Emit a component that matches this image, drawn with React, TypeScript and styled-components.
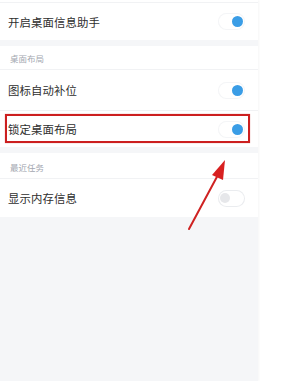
import styled, { createGlobalStyle } from "styled-components"

const GlobalStyle = createGlobalStyle`
  html, body {
    margin: 0;
    padding: 0;
    background: #ffffff;
  }
  body {
    font-family: "Noto Sans CJK SC", "Noto Sans", sans-serif;
  }
`

const Page = styled.div`
  position: relative;
  width: 282px;
  height: 381px;
  display: flex;
  flex-direction: row;
  overflow: hidden;
  background: #ffffff;
`

const Screen = styled.div`
  width: 258px;
  height: 381px;
  display: flex;
  flex-direction: column;
  background: #f5f6f8;
  box-shadow: 1px 0 2px rgba(0, 0, 0, 0.04);
  padding-top: 2px;
  box-sizing: border-box;
  background-image: linear-gradient(#ffffff, #ffffff);
  background-size: 100% 2px;
  background-repeat: no-repeat;
`

const Row = styled.div<{ $height: number; $highlighted?: boolean }>`
  position: relative;
  height: ${({ $height }) => $height}px;
  display: flex;
  flex-direction: row;
  align-items: center;
  justify-content: space-between;
  padding: 0 14px 0 8px;
  background: #ffffff;
  border-top: 1px solid #f1f2f4;
  box-sizing: border-box;

  ${({ $highlighted }) => $highlighted && `
    &::after {
      content: "";
      position: absolute;
      left: 5px;
      right: 8px;
      top: 3px;
      bottom: 4px;
      border: 2px solid #cc1f1f;
      box-shadow: 0 0 1px rgba(200, 30, 30, 0.5);
      pointer-events: none;
    }
  `}
`

const Label = styled.span`
  font-size: 11.4px;
  color: #2e2e2e;
  letter-spacing: 0.1px;
`

const Gap = styled.div<{ $height: number }>`
  height: ${({ $height }) => $height}px;
  background: #f5f6f8;
`

const SectionHeader = styled.div<{ $height: number }>`
  height: ${({ $height }) => $height}px;
  display: flex;
  align-items: flex-end;
  padding: 0 0 5px 10px;
  box-sizing: border-box;
  background: #ffffff;
  font-size: 8.5px;
  color: #a3a7b0;
`

const Track = styled.div<{ $on: boolean }>`
  width: 25px;
  height: 15px;
  border-radius: 8px;
  background: #ffffff;
  box-shadow: ${({ $on }) =>
    $on
      ? "0 0 0 1px #f4f5f7, 0 0 2px rgba(0, 0, 0, 0.07)"
      : "0 0 0 1px #eaecef, 0 0 2px rgba(0, 0, 0, 0.06)"};
  display: flex;
  align-items: center;
  justify-content: ${({ $on }) => ($on ? "flex-end" : "flex-start")};
  padding: 0 1px;
  box-sizing: border-box;
`

const Knob = styled.div<{ $on: boolean }>`
  width: ${({ $on }) => ($on ? 11 : 10)}px;
  height: ${({ $on }) => ($on ? 11 : 10)}px;
  border-radius: 50%;
  background: ${({ $on }) => ($on ? "#3a9de6" : "#e6e7ea")};
`

const Arrow = styled.svg`
  position: absolute;
  left: 0;
  top: 0;
  pointer-events: none;
`

const Toggle = ({ on }: { on: boolean }) => (
  <Track $on={on}>
    <Knob $on={on} />
  </Track>
)

export default function App() {
  return (
    <>
      <GlobalStyle />
      <Page>
        <Screen>
          <Row $height={38}>
            <Label>开启桌面信息助手</Label>
            <Toggle on />
          </Row>
          <Gap $height={6} />
          <SectionHeader $height={23}>桌面布局</SectionHeader>
          <Row $height={41}>
            <Label>图标自动补位</Label>
            <Toggle on />
          </Row>
          <Row $height={37} $highlighted>
            <Label>锁定桌面布局</Label>
            <Toggle on />
          </Row>
          <Gap $height={6} />
          <SectionHeader $height={25}>最近任务</SectionHeader>
          <Row $height={39}>
            <Label>显示内存信息</Label>
            <Toggle on={false} />
          </Row>
        </Screen>
        <Arrow width="282" height="381" viewBox="0 0 282 381">
          <line x1="189" y1="229" x2="219" y2="173" stroke="#cf2222" strokeWidth="2" strokeLinecap="round" />
          <polygon points="225,160 212,175 223,180" fill="#d82020" />
        </Arrow>
      </Page>
    </>
  )
}
